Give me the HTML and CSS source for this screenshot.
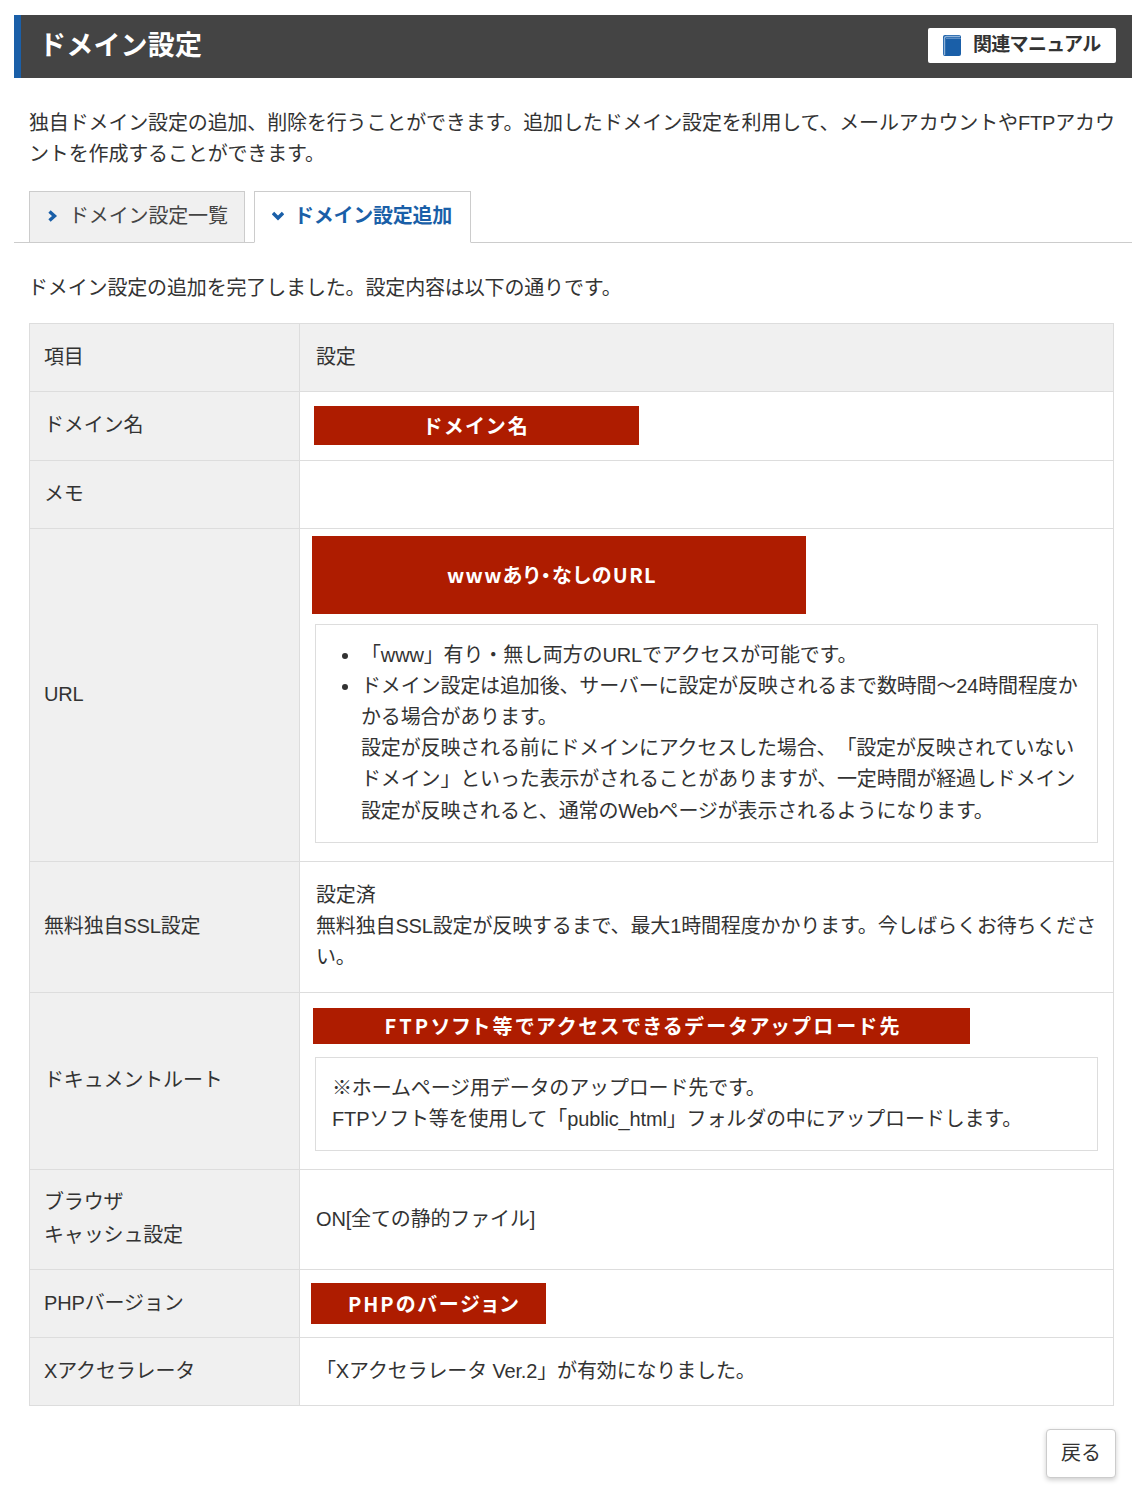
FILE: index.html
```html
<!DOCTYPE html>
<html lang="ja">

<head>
    <meta charset="utf-8" />
    <title>ドメイン設定</title>
    <link rel="stylesheet" href="styles.css">
</head>

<body>
    <div class="page">
        <header class="title-bar">
            <h1>ドメイン設定</h1>
            <a class="manual" href="#">
                <svg class="book" width="18" height="21" viewBox="0 0 18 21">
                    <rect x="0" y="0" width="18" height="21" rx="2" fill="#1a5fa8" />
                    <path d="M1.5 20V3.5Q1.5 1.5 3.5 1.5H17" fill="none" stroke="#8fb2d8" stroke-width="1.4" />
                    <path d="M3 3.5H18" fill="none" stroke="#5c8dc4" stroke-width="1" />
                </svg>
                <span>関連マニュアル</span>
            </a>
        </header>

        <p class="lead">独自ドメイン設定の追加、削除を行うことができます。追加したドメイン設定を利用して、メールアカウントやFTPアカウントを作成することができます。</p>

        <ul class="tabs">
            <li class="tab">
                <svg class="arrow" width="10" height="12" viewBox="0 0 10 12"><path d="M1.5 1.5L6.5 6l-5 4.5" fill="none" stroke="#1a5fa8" stroke-width="3.4" /></svg>
                ドメイン設定一覧
            </li>
            <li class="tab active">
                <svg class="arrow" width="12" height="10" viewBox="0 0 12 10"><path d="M1 2l5 5 5-5" fill="none" stroke="#1a5fa8" stroke-width="3.4" /></svg>
                ドメイン設定追加
            </li>
        </ul>

        <p class="done">ドメイン設定の追加を完了しました。設定内容は以下の通りです。</p>

        <table class="settings">
            <tr class="row-head">
                <th>項目</th>
                <td class="head-cell">設定</td>
            </tr>
            <tr class="row-domain">
                <th>ドメイン名</th>
                <td><div class="mask mask-domain">ドメイン名</div></td>
            </tr>
            <tr class="row-memo">
                <th>メモ</th>
                <td></td>
            </tr>
            <tr class="row-url">
                <th>URL</th>
                <td>
                    <div class="mask mask-url">wwwあり・なしのURL</div>
                    <div class="note note-url">
                        <ul>
                            <li>「www」有り・無し両方のURLでアクセスが可能です。</li>
                            <li>ドメイン設定は追加後、サーバーに設定が反映されるまで数時間～24時間程度かかる場合があります。<br>設定が反映される前にドメインにアクセスした場合、「設定が反映されていないドメイン」といった表示がされることがありますが、一定時間が経過しドメイン設定が反映されると、通常のWebページが表示されるようになります。</li>
                        </ul>
                    </div>
                </td>
            </tr>
            <tr class="row-ssl">
                <th>無料独自SSL設定</th>
                <td>設定済<br>無料独自SSL設定が反映するまで、最大1時間程度かかります。今しばらくお待ちください。</td>
            </tr>
            <tr class="row-docroot">
                <th>ドキュメントルート</th>
                <td>
                    <div class="mask mask-ftp">FTPソフト等でアクセスできるデータアップロード先</div>
                    <div class="note note-ftp">※ホームページ用データのアップロード先です。<br>FTPソフト等を使用して「public_html」フォルダの中にアップロードします。</div>
                </td>
            </tr>
            <tr class="row-cache">
                <th>ブラウザ<br>キャッシュ設定</th>
                <td>ON[全ての静的ファイル]</td>
            </tr>
            <tr class="row-php">
                <th>PHPバージョン</th>
                <td><div class="mask mask-php">PHPのバージョン</div></td>
            </tr>
            <tr class="row-xacc">
                <th>Xアクセラレータ</th>
                <td>「Xアクセラレータ Ver.2」が有効になりました。</td>
            </tr>
        </table>

        <div class="actions">
            <button type="button" class="back">戻る</button>
        </div>
    </div>
</body>

</html>
```

FILE: styles.css
```css
* {
    box-sizing: border-box;
}

body {
    margin: 0;
    color: #333;
    font-family: "Liberation Sans", "Noto Sans CJK JP", sans-serif;
    font-size: 20px;
    line-height: 31.2px;
    letter-spacing: -.15px;
    text-spacing-trim: space-all;
    background: #fff;
}

.page {
    padding: 15px 16px 0 14px;
}

.title-bar {
    display: flex;
    align-items: center;
    justify-content: space-between;
    height: 63px;
    padding: 0 16px 2px 18px;
    background: #444;
    border-left: 7px solid #1a5fa8;
}

.title-bar h1 {
    margin: 2px 0 0;
    color: #fff;
    font-size: 27px;
    font-weight: bold;
    letter-spacing: .2px;
}

.manual {
    display: flex;
    align-items: center;
    gap: 12px;
    width: 188px;
    height: 35px;
    padding-left: 15px;
    border-radius: 2px;
    background: #fff;
    color: #333;
    font-size: 19px;
    font-weight: bold;
    letter-spacing: -.7px;
    text-decoration: none;
}

.manual span {
    padding-bottom: 2px;
}

.lead {
    margin: 30px 0 0 15px;
    width: 1090px;
}

.tabs {
    display: flex;
    gap: 9px;
    height: 52px;
    margin: 21px 0 0;
    padding: 0 0 0 15px;
    list-style: none;
    border-bottom: 1px solid #ccc;
}

.tab {
    display: flex;
    align-items: center;
    gap: 11px;
    width: 216px;
    height: 52px;
    padding: 0 0 2px 18px;
    border: 1px solid #ccc;
    background: #f0f0f0;
    color: #444;
}

.tab.active {
    gap: 10px;
    width: 217px;
    padding-left: 17px;
    border-bottom-color: #fff;
    background: #fff;
    color: #1a5fa8;
    font-weight: bold;
    letter-spacing: -.25px;
}

.done {
    margin: 30px 0 0 14px;
}

.settings {
    width: 1085px;
    margin: 18px 0 0 15px;
    border-collapse: collapse;
    table-layout: fixed;
}

.settings th,
.settings td {
    padding: 0 14px;
    border: 1px solid #ddd;
    font-weight: normal;
    text-align: left;
    vertical-align: middle;
}

.settings th {
    width: 270px;
    background: #f0f0f0;
}

.settings .head-cell {
    background: #f0f0f0;
}

.settings td {
    padding-left: 16px;
    padding-right: 15px;
}

.row-head { height: 68px; }
.row-domain { height: 69px; }
.row-memo { height: 68px; }
.row-url { height: 333px; }
.row-ssl { height: 131px; }
.row-docroot { height: 177px; }
.row-cache { height: 100px; }
.row-php { height: 68px; }
.row-xacc { height: 68px; }

.settings .row-url td {
    padding-top: 7px;
    vertical-align: top;
}

.settings .row-docroot td {
    padding-bottom: 2px;
}

.row-cache th {
    line-height: 33px;
}

.mask {
    background: #ae1c00;
    color: #fff;
    font-family: "Noto Sans CJK JP", sans-serif;
    font-feature-settings: "palt";
    font-weight: bold;
    text-align: center;
}

.mask-domain {
    width: 325px;
    height: 39px;
    margin-left: -2px;
    padding-left: 2px;
    line-height: 39px;
    letter-spacing: 3px;
}

.mask-url {
    width: 494px;
    height: 78px;
    margin-left: -4px;
    padding-right: 14px;
    line-height: 78px;
    letter-spacing: 1.3px;
}

.mask-ftp {
    width: 657px;
    height: 36px;
    margin-left: -3px;
    padding-left: 4px;
    line-height: 35px;
    letter-spacing: 3px;
}

.mask-php {
    width: 235px;
    height: 41px;
    margin-left: -5px;
    padding-left: 11px;
    line-height: 41px;
    letter-spacing: 2px;
}

.note {
    width: 783px;
    margin-left: -1px;
    border: 1px solid #ddd;
}

.note-url {
    height: 219px;
    margin-top: 10px;
    padding: 15px 16px 0;
}

.note-url ul {
    margin: 0;
    padding-left: 29px;
}

.note-ftp {
    height: 94px;
    margin-top: 13px;
    padding: 15px 16px 0;
}

.actions {
    display: flex;
    justify-content: flex-end;
    padding: 23px 16px 22px 0;
}

.back {
    width: 70px;
    height: 49px;
    padding-bottom: 4px;
    border: 1px solid #ccc;
    border-radius: 4px;
    background: #fff;
    box-shadow: 0 2px 5px rgba(0, 0, 0, .2);
    color: #333;
    font-family: inherit;
    font-size: 20px;
    cursor: pointer;
}
```
